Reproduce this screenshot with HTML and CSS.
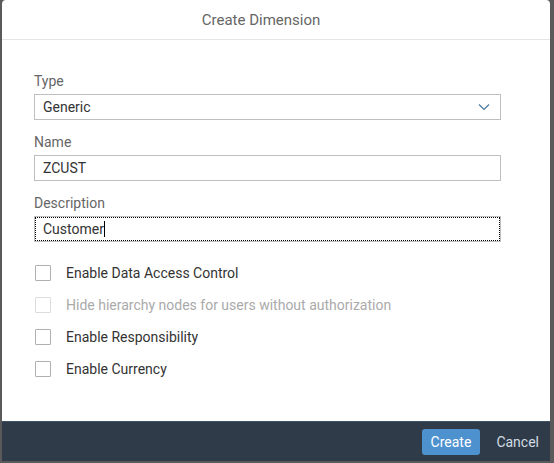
FILE: index.html
```html
<!DOCTYPE html>
<html>
<head>
<meta charset="utf-8">
<link rel="stylesheet" href="styles.css">
</head>
<body>
<div class="dialog">
  <div class="header">Create Dimension</div>
  <div class="content">
    <div class="field">
      <div class="label">Type</div>
      <div class="input select">
        <span>Generic</span>
        <svg class="chev" width="12" height="8" viewBox="0 0 12 8"><path d="M1 1.5 L6 6.5 L11 1.5" fill="none" stroke="#4a78a0" stroke-width="1.2"/></svg>
      </div>
    </div>
    <div class="field">
      <div class="label">Name</div>
      <div class="input"><span>ZCUST</span></div>
    </div>
    <div class="field">
      <div class="label">Description</div>
      <div class="input focused"><span>Customer</span><span class="caret"></span></div>
    </div>
    <div class="checks">
      <div class="check"><span class="box"></span><span>Enable Data Access Control</span></div>
      <div class="check disabled"><span class="box"></span><span>Hide hierarchy nodes for users without authorization</span></div>
      <div class="check"><span class="box"></span><span>Enable Responsibility</span></div>
      <div class="check"><span class="box"></span><span>Enable Currency</span></div>
    </div>
  </div>
  <div class="footer">
    <button class="btn primary">Create</button>
    <button class="btn ghost">Cancel</button>
  </div>
</div>
</body>
</html>
```
FILE: styles.css
```css
html, body {
  margin: 0;
  padding: 0;
}
body {
  background: #5a5a5a;
  width: 554px;
  height: 463px;
  font-family: Roboto, "Liberation Sans", sans-serif;
  overflow: hidden;
}
.dialog {
  margin-left: 2px;
  width: 548px;
  height: 461px;
  background: #fff;
  border-radius: 4px 4px 0 0;
  display: flex;
  flex-direction: column;
  overflow: hidden;
}
.header {
  height: 39px;
  border-bottom: 1px solid #e5e5e5;
  display: flex;
  align-items: center;
  justify-content: center;
  font-size: 15px;
  color: #666;
  padding-right: 30px;
}
.content {
  flex: 1;
  padding: 33px 0 0 32px;
}
.field {
  margin-bottom: 14px;
}
.label {
  font-size: 14px;
  color: #666;
  height: 16px;
  line-height: 16px;
  margin-bottom: 5px;
}
.input {
  width: 457px;
  height: 24px;
  border: 1px solid #bfbfbf;
  display: flex;
  align-items: center;
  padding-left: 8px;
  box-sizing: content-box;
  font-size: 14px;
  color: #333;
}
.input.select {
  justify-content: space-between;
}
.chev {
  margin-right: 10px;
}
.input.focused {
  outline: 1px dotted #000;
  outline-offset: -2px;
}
.caret {
  display: inline-block;
  width: 1px;
  height: 16px;
  background: #000;
}
.checks {
  margin-top: 23px;
  display: flex;
  flex-direction: column;
  gap: 16px;
}
.check {
  display: flex;
  align-items: center;
  font-size: 14px;
  color: #333;
  height: 16px;
  padding-left: 1px;
}
.box {
  width: 14px;
  height: 14px;
  border: 1px solid #b0b0b0;
  margin-right: 15px;
  border-radius: 1px;
}
.check.disabled {
  color: #aaa;
}
.check.disabled .box {
  border-color: #dcdcdc;
}
.footer {
  height: 39px;
  background: #2f3b48;
  border-top: 1px solid #3d5468;
  display: flex;
  align-items: center;
  justify-content: flex-end;
  padding-right: 3px;
  gap: 8px;
}
.btn {
  font-family: inherit;
  font-size: 14px;
  border: none;
  border-radius: 3px;
  height: 26px;
  padding: 0 8px;
  cursor: pointer;
}
.btn.primary {
  background: #4e91cf;
  color: #fff;
  padding: 0 9px;
}
.btn.ghost {
  background: transparent;
  color: #d2dbe4;
}
```
